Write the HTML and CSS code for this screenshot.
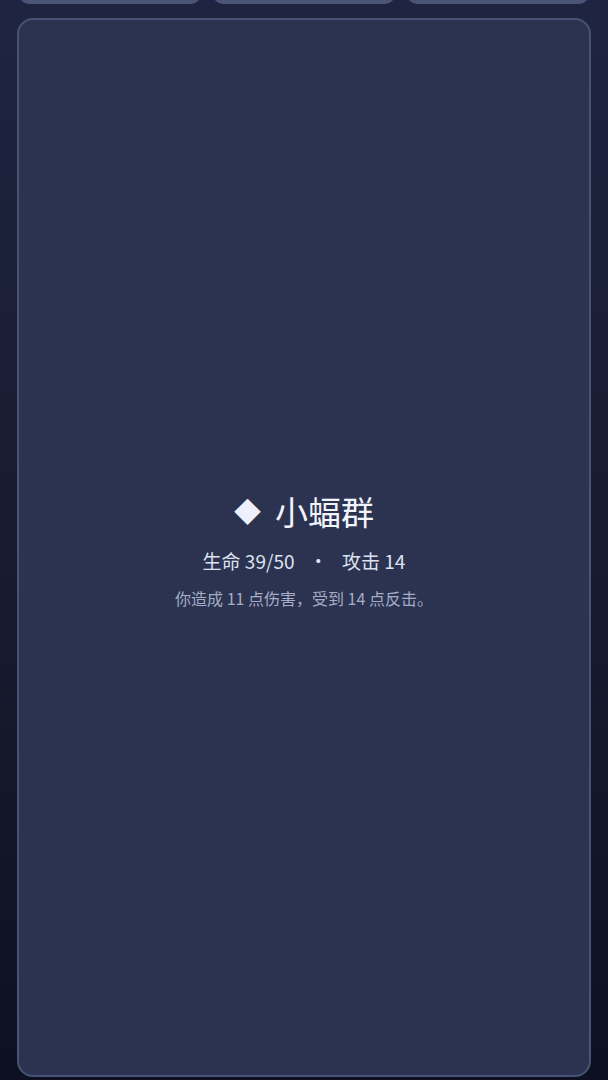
FILE: index.html
```html
<!DOCTYPE html>
<html lang="zh">
<head>
<meta charset="utf-8">
<link rel="stylesheet" href="styles.css">
</head>
<body>
<div class="page">
  <div class="tabs">
    <div class="tab"></div>
    <div class="tab"></div>
    <div class="tab"></div>
  </div>
  <div class="card">
    <div class="title"><span class="diamond">◆</span><span>小蝠群</span></div>
    <div class="stats">生命 39/50 <span class="dot">·</span> 攻击 14</div>
    <div class="desc">你造成 11 点伤害，受到 14 点反击。</div>
  </div>
</div>
</body>
</html>
```
FILE: styles.css
```css
html, body {
  margin: 0;
  padding: 0;
  height: 100%;
}
body {
  background: linear-gradient(180deg, #1f2440 0%, #161a2e 60%, #0d1020 100%);
  font-family: "Noto Sans CJK SC", "Noto Sans", sans-serif;
  color: #e8ecf8;
  overflow: hidden;
}
.page {
  display: flex;
  flex-direction: column;
  padding: 0 17px;
  height: 1080px;
  box-sizing: border-box;
}
.tabs {
  display: flex;
  gap: 12px;
  padding: 0 2px;
  margin-top: -40px;
  height: 44px;
}
.tab {
  flex: 1;
  background: #4a5578;
  border-radius: 0 0 10px 10px;
}
.card {
  margin-top: 14px;
  height: 1059px;
  box-sizing: border-box;
  background: #2c3350;
  border: 2px solid #465276;
  border-radius: 16px;
  display: flex;
  flex-direction: column;
  align-items: center;
  justify-content: center;
  padding-top: 4px;
}
.title {
  font-size: 33px;
  line-height: 40px;
  color: #f2f4fc;
  display: flex;
  align-items: center;
  gap: 14px;
}
.diamond {
  font-size: 27px;
  color: #eef1fb;
}
.stats {
  margin-top: 17px;
  font-size: 19px;
  line-height: 26px;
  color: #dde2f0;
}
.dot {
  margin: 0 10px;
}
.desc {
  margin-top: 14px;
  font-size: 16px;
  line-height: 20px;
  color: #a4acc6;
}
```
